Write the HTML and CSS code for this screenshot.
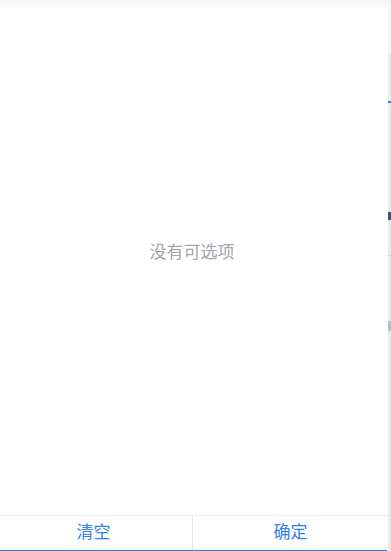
FILE: index.html
```html
<!DOCTYPE html>
<html lang="zh-CN">
<head>
<meta charset="utf-8">
<link rel="stylesheet" href="styles.css">
<title>选择</title>
</head>
<body>
<div class="page">
  <div class="panel">
    <div class="top-shade"></div>
    <div class="content">
      <div class="empty">没有可选项</div>
    </div>
    <div class="footer">
      <button class="btn btn-clear">清空</button>
      <button class="btn btn-ok">确定</button>
    </div>
    <div class="underline"></div>
  </div>
  <div class="strip">
    <div class="strip-top"></div>
    <div class="strip-mark"></div>
    <div class="strip-icon"></div>
    <div class="strip-line"></div>
    <div class="strip-icon2"></div>
  </div>
</div>
</body>
</html>
```

FILE: styles.css
```css
html, body {
  margin: 0;
  padding: 0;
  height: 100%;
  background: #ffffff;
}
body {
  font-family: "Noto Sans CJK SC", "Noto Sans", sans-serif;
}
.page {
  display: flex;
  height: 551px;
  width: 391px;
  overflow: hidden;
}
.panel {
  width: 388px;
  display: flex;
  flex-direction: column;
  background: #ffffff;
}
.top-shade {
  height: 8px;
  background: linear-gradient(#f6f6f6, #fbfbfb);
}
.content {
  flex: 1;
  display: flex;
  align-items: center;
  justify-content: center;
  padding-bottom: 22px;
  padding-right: 4px;
}
.empty {
  font-size: 17px;
  color: #a2a5ab;
  line-height: 22px;
}
.footer {
  display: flex;
  height: 34px;
  border-top: 1px solid #eeeeee;
}
.btn {
  box-sizing: border-box;
  border: 0;
  background: #ffffff;
  font-family: inherit;
  font-size: 17px;
  color: #3580ea;
  padding: 0 0 4px 0;
  line-height: 30px;
}
.btn-clear {
  flex: none;
  width: 192px;
  padding-right: 5px;
}
.btn-ok {
  flex: 1;
  border-left: 1px solid #e6e6e6;
}
.underline {
  height: 1px;
  background: #3b7ad8;
  margin-right: 1px;
}
.strip {
  width: 3px;
  position: relative;
  background: #ebebef;
  flex: none;
}
.strip-top {
  height: 54px;
  background: #f5f5f6;
  border-bottom: 1px solid #dcdce0;
}
.strip-mark {
  position: absolute;
  left: 0;
  top: 101px;
  width: 3px;
  height: 2px;
  background: #3b7de0;
}
.strip-icon {
  position: absolute;
  left: 0;
  top: 212px;
  width: 3px;
  height: 8px;
  background: #4a4f78;
}
.strip-line {
  position: absolute;
  left: 0;
  top: 255px;
  width: 3px;
  height: 1px;
  background: #d0d0d4;
}
.strip-icon2 {
  position: absolute;
  left: 0;
  top: 321px;
  width: 3px;
  height: 10px;
  background: #b8bcd0;
}
```
